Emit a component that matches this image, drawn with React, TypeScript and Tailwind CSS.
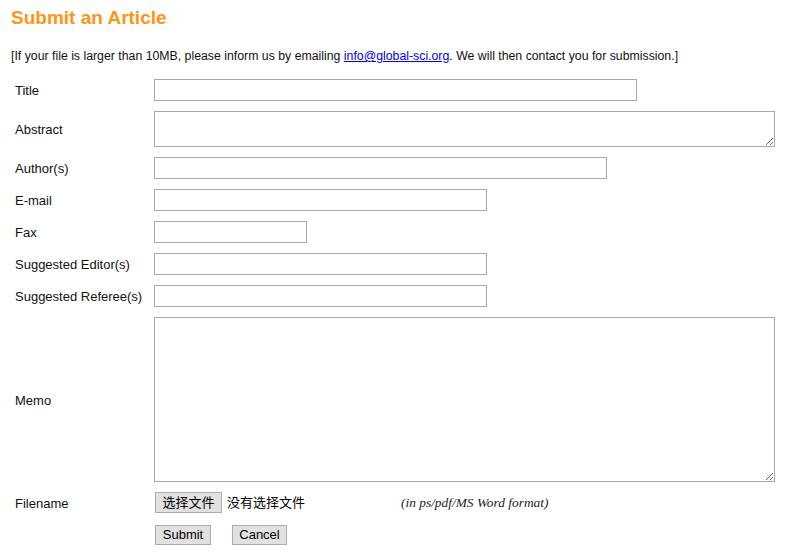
import React from "react";

const inputCls =
  "h-[22px] border border-[#a9a9a9] bg-white outline-none px-1 text-[13px]";
const labelCls = "text-[13px] text-[#111] pt-[2px]";

function Row({ label, children }: { label: string; children: React.ReactNode }) {
  return (
    <div className="flex items-center">
      <div className={`w-[139px] shrink-0 ${labelCls}`}>{label}</div>
      {children}
    </div>
  );
}

export default function App() {
  return (
    <div
      className="w-[804px] h-[560px] bg-white pl-[11px]"
      style={{ fontFamily: '"Liberation Sans", Arial, sans-serif' }}
    >
      <h1 className="pt-[6px] text-[19px] leading-[23px] font-bold text-[#fb9618]">
        Submit an Article
      </h1>
      <p className="mt-[19px] text-[12.3px] leading-[16px] text-[#111]">
        [If your file is larger than 10MB, please inform us by emailing{" "}
        <a href="#" className="text-[#0000ee] underline">
          info@global-sci.org
        </a>
        . We will then contact you for submission.]
      </p>
      <div className="mt-[15px] pl-[4px] flex flex-col gap-[10px]">
        <Row label="Title">
          <input className={`${inputCls} w-[483px]`} />
        </Row>
        <Row label="Abstract">
          <textarea className={`h-[36px] w-[621px] border border-[#a9a9a9] block`} />
        </Row>
        <Row label="Author(s)">
          <input className={`${inputCls} w-[453px]`} />
        </Row>
        <Row label="E-mail">
          <input className={`${inputCls} w-[333px]`} />
        </Row>
        <Row label="Fax">
          <input className={`${inputCls} w-[153px]`} />
        </Row>
        <Row label="Suggested Editor(s)">
          <input className={`${inputCls} w-[333px]`} />
        </Row>
        <Row label="Suggested Referee(s)">
          <input className={`${inputCls} w-[333px]`} />
        </Row>
        <Row label="Memo">
          <textarea className="h-[165px] w-[621px] border border-[#a9a9a9] block" />
        </Row>
        <Row label="Filename">
          <div
            className="flex items-center w-[247px] pl-[1px] text-[13px]"
            style={{ fontFamily: '"Liberation Sans", Arial, "Noto Sans CJK SC", sans-serif' }}
          >
            <button className="h-[21px] w-[67px] bg-[#e1e1e1] border border-[#adadad] text-[13px] leading-none text-black flex items-center justify-center">
              选择文件
            </button>
            <span className="ml-[5px] text-black">没有选择文件</span>
          </div>
          <span
            className="italic text-[13.4px] text-[#222]"
            style={{ fontFamily: '"Liberation Serif", "Times New Roman", serif' }}
          >
            (in ps/pdf/MS Word format)
          </span>
        </Row>
        <div className="flex items-center pl-[140px] gap-[21px] mt-[1px]">
          <button className="h-[20px] w-[56px] bg-[#e1e1e1] border border-[#adadad] text-[13px] leading-none text-black">
            Submit
          </button>
          <button className="h-[20px] w-[55px] bg-[#e1e1e1] border border-[#adadad] text-[13px] leading-none text-black">
            Cancel
          </button>
        </div>
      </div>
    </div>
  );
}
